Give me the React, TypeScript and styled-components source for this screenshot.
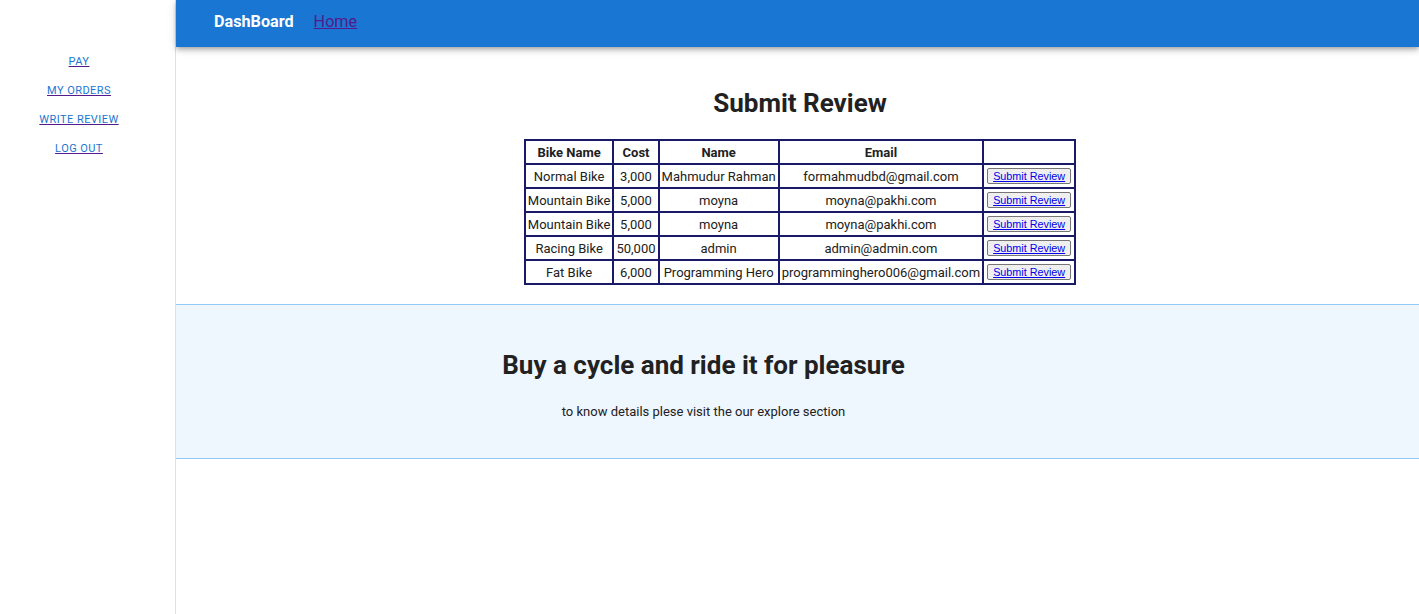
import * as React from 'react';
import styled, {createGlobalStyle} from "styled-components";

const GlobalStyle = createGlobalStyle`
  html, body {
    margin: 0;
    padding: 0;
    background: #fff;
    font-family: Roboto, "Liberation Sans", sans-serif;
    color: rgba(0, 0, 0, 0.87);
  }
`

const Layout = styled.div`
  display: flex;
  min-height: 614px;
`

const Drawer = styled.nav`
  flex: 0 0 176px;
  display: flex;
  flex-direction: column;
  align-items: center;
  gap: 12px;
  padding: 53px 17px 0 0;
  border-right: 1px solid #e0e0e0;
  box-sizing: border-box;
`

const NavLink = styled.a`
  font-size: 11px;
  font-weight: 400;
  letter-spacing: 0.45px;
  line-height: 17px;
  text-transform: uppercase;
  color: #1976d2;
  text-decoration: underline;
  text-decoration-color: #551a8b;
  cursor: pointer;
`

const Main = styled.main`
  flex: 1;
  display: flex;
  flex-direction: column;
`

const AppBar = styled.header`
  display: flex;
  align-items: center;
  gap: 20px;
  height: 47px;
  padding: 0 38px 4px;
  background-color: #1976d2;
  box-shadow: 0 2px 4px -1px rgba(0, 0, 0, 0.2), 0 4px 5px 0 rgba(0, 0, 0, 0.14), 0 1px 10px 0 rgba(0, 0, 0, 0.12);
  box-sizing: border-box;
`

const Brand = styled.span`
  font-size: 16.2px;
  font-weight: 700;
  color: #fff;
`

const HomeLink = styled.a`
  font-size: 16.2px;
  color: #551a8b;
  text-decoration: underline;
  cursor: pointer;
`

const Content = styled.section`
  display: flex;
  flex-direction: column;
  align-items: center;
  padding: 40px 0 19px 5px;
`

const Title = styled.h2`
  margin: 0 0 20px;
  font-size: 26px;
  font-weight: 700;
  line-height: 32px;
  color: #212121;
`

const Table = styled.table`
  border-collapse: collapse;
  border: 2px solid #1a1a6b;
  font-size: 13px;
  color: #212121;
`

const Th = styled.th`
  border: 2px solid #1a1a6b;
  padding: 3px 2px;
  height: 16px;
  font-weight: 700;
  text-align: center;
`

const Td = styled.td`
  border: 2px solid #1a1a6b;
  padding: 3px 2px;
  height: 16px;
  text-align: center;
  white-space: nowrap;
`

const ReviewButton = styled.button`
  font-family: Arial, "Liberation Sans", sans-serif;
  font-size: 10.8px;
  padding: 1px 5px;
  border: 1px solid #767676;
  border-radius: 2px;
  background: #efefef;
  margin: 0 1px;
  cursor: pointer;

  a {
    color: #0000ee;
    text-decoration: underline;
  }
`

const Banner = styled.section`
  display: flex;
  flex-direction: column;
  align-items: center;
  padding: 44px 188px 36px 0;
  background-color: #eef6fe;
  border-top: 1px solid #90caf9;
  border-bottom: 1px solid #90caf9;
`

const BannerTitle = styled.h3`
  margin: 0 0 21px;
  font-size: 26px;
  font-weight: 700;
  line-height: 32px;
  color: #212121;
`

const BannerText = styled.p`
  margin: 0;
  font-size: 13px;
  line-height: 20px;
  color: #212121;
`

const orders = [
    {bike: 'Normal Bike', cost: '3,000', name: 'Mahmudur Rahman', email: 'formahmudbd@gmail.com'},
    {bike: 'Mountain Bike', cost: '5,000', name: 'moyna', email: 'moyna@pakhi.com'},
    {bike: 'Mountain Bike', cost: '5,000', name: 'moyna', email: 'moyna@pakhi.com'},
    {bike: 'Racing Bike', cost: '50,000', name: 'admin', email: 'admin@admin.com'},
    {bike: 'Fat Bike', cost: '6,000', name: 'Programming Hero', email: 'programminghero006@gmail.com'},
]

const App = () => {
    return (
        <>
            <GlobalStyle/>
            <Layout>
                <Drawer>
                    <NavLink>Pay</NavLink>
                    <NavLink>My Orders</NavLink>
                    <NavLink>Write Review</NavLink>
                    <NavLink>Log Out</NavLink>
                </Drawer>
                <Main>
                    <AppBar>
                        <Brand>DashBoard</Brand>
                        <HomeLink>Home</HomeLink>
                    </AppBar>
                    <Content>
                        <Title>Submit Review</Title>
                        <Table>
                            <thead>
                            <tr>
                                <Th>Bike Name</Th>
                                <Th>Cost</Th>
                                <Th>Name</Th>
                                <Th>Email</Th>
                                <Th></Th>
                            </tr>
                            </thead>
                            <tbody>
                            {orders.map((order, i) => (
                                <tr key={i}>
                                    <Td>{order.bike}</Td>
                                    <Td>{order.cost}</Td>
                                    <Td>{order.name}</Td>
                                    <Td>{order.email}</Td>
                                    <Td>
                                        <ReviewButton><a>Submit Review</a></ReviewButton>
                                    </Td>
                                </tr>
                            ))}
                            </tbody>
                        </Table>
                    </Content>
                    <Banner>
                        <BannerTitle>Buy a cycle and ride it for pleasure</BannerTitle>
                        <BannerText>to know details plese visit the our explore section</BannerText>
                    </Banner>
                </Main>
            </Layout>
        </>
    );
};

export default App;
